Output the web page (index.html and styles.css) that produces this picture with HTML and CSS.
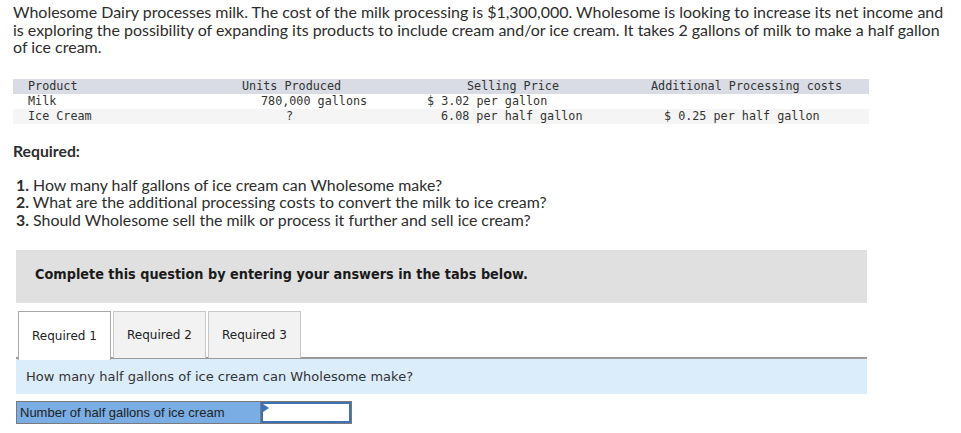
FILE: index.html
```html
<!DOCTYPE html>
<html>
<head>
<meta charset="utf-8">
<link rel="stylesheet" href="styles.css">
</head>
<body>
<p class="intro">Wholesome Dairy processes milk. The cost of the milk processing is $1,300,000. Wholesome is looking to increase its net income and is exploring the possibility of expanding its products to include cream and/or ice cream. It takes 2 gallons of milk to make a half gallon of ice cream.</p>

<div class="data">
  <div class="row head">
    <div class="c1">Product</div>
    <div class="c2 p14">Units Produced</div>
    <div class="c3 p67">Selling Price</div>
    <div class="c4 p31">Additional Processing costs</div>
  </div>
  <div class="row">
    <div class="c1">Milk</div>
    <div class="c2 p33">780,000 gallons</div>
    <div class="c3 p27">$ 3.02 per gallon</div>
    <div class="c4"></div>
  </div>
  <div class="row alt">
    <div class="c1">Ice Cream</div>
    <div class="c2 p58">?</div>
    <div class="c3 p41">6.08 per half gallon</div>
    <div class="c4 p44">$ 0.25 per half gallon</div>
  </div>
</div>

<h3 class="req">Required:</h3>
<ol class="qs">
  <li><b>1.</b> How many half gallons of ice cream can Wholesome make?</li>
  <li><b>2.</b> What are the additional processing costs to convert the milk to ice cream?</li>
  <li><b>3.</b> Should Wholesome sell the milk or process it further and sell ice cream?</li>
</ol>

<div class="notice">Complete this question by entering your answers in the tabs below.</div>

<div class="tabs">
  <div class="tab active">Required 1</div>
  <div class="tab">Required 2</div>
  <div class="tab">Required 3</div>
</div>
<div class="prompt">How many half gallons of ice cream can Wholesome make?</div>

<div class="answer">
  <div class="label">Number of half gallons of ice cream</div>
  <div class="field"><span class="flag"></span></div>
</div>
</body>
</html>
```

FILE: styles.css
```css
html, body { margin: 0; padding: 0; background: #fff; }
body { padding-top: 3px; color: #2d2d2d; font-family: Lato, "Open Sans", sans-serif; }

.intro {
  margin: 0 0 0 13px;
  width: 936px;
  font-size: 15.98px;
  line-height: 17.6px;
}

.data {
  margin: 23px 0 0 13px;
  width: 856px;
  font-family: "DejaVu Sans Mono", "Liberation Mono", monospace;
  font-size: 11.75px;
  color: #333;
}
.row {
  display: grid;
  grid-template-columns: 215px 172px 220px 249px;
  height: 15px;
  line-height: 15px;
  white-space: pre;
}
.row.head { background: #d9dce5; }
.row.alt { background: #f5f5f5; }
.c1 { padding-left: 15px; }
.p14 { padding-left: 14px; }
.p33 { padding-left: 33px; }
.p58 { padding-left: 58px; }
.p67 { padding-left: 67px; }
.p27 { padding-left: 27px; }
.p41 { padding-left: 41px; }
.p31 { padding-left: 31px; }
.p44 { padding-left: 44px; }

.req {
  margin: 18px 0 0 13px;
  font-size: 15.75px;
  line-height: 18px;
  font-weight: 700;
}
.qs {
  list-style: none;
  margin: 16px 0 0 16px;
  padding: 0;
  font-size: 15.9px;
  line-height: 17.7px;
}

.notice {
  margin: 21px 0 0 16px;
  width: 851px;
  height: 53px;
  box-sizing: border-box;
  padding: 0 0 5px 19px;
  background: #e0e0e0;
  display: flex;
  align-items: center;
  font-family: "DejaVu Sans Condensed", "DejaVu Sans", sans-serif;
  font-stretch: condensed;
  font-weight: 700;
  font-size: 14.3px;
  color: #1a1a1a;
}

.tabs {
  margin: 8px 0 0 16px;
  width: 851px;
  padding-left: 2px;
  box-sizing: border-box;
  display: flex;
  gap: 2px;
  border-bottom: 2px solid #9a9a9a;
  height: 48px;
}
.tab {
  width: 93px;
  height: 47px;
  box-sizing: border-box;
  border: 1px solid #c8c8c8;
  border-bottom: none;
  background: #f2f2f2;
  display: flex;
  align-items: center;
  justify-content: center;
  font-family: "DejaVu Sans", Verdana, sans-serif;
  font-size: 12px;
  color: #222;
}
.tab.active {
  background: #fff;
  height: 49px;
  border-color: #aaa;
  position: relative;
  z-index: 1;
}

.prompt {
  margin-left: 16px;
  width: 851px;
  height: 35px;
  box-sizing: border-box;
  padding-left: 10px;
  background: #dbedfb;
  display: flex;
  align-items: center;
  font-family: "DejaVu Sans", Verdana, sans-serif;
  font-size: 13px;
  color: #333;
}

.answer {
  margin: 7px 0 0 16px;
  display: flex;
  width: 336px;
  height: 23px;
  box-sizing: border-box;
  border: 1px solid #7a7a7a;
}
.label {
  width: 244px;
  box-sizing: border-box;
  background: #7aade4;
  border-right: 1px solid #7a7a7a;
  padding-left: 3px;
  display: flex;
  align-items: center;
  font-family: "Liberation Sans", Arial, sans-serif;
  font-size: 13px;
  color: #222;
}
.field {
  flex: 1;
  background: #fff;
  border: 2px solid #3d72b5;
  position: relative;
}
.flag {
  position: absolute;
  left: 0;
  top: 0;
  width: 0;
  height: 0;
  border-top: 4px solid transparent;
  border-bottom: 4px solid transparent;
  border-left: 6px solid #3d72b5;
}
```
